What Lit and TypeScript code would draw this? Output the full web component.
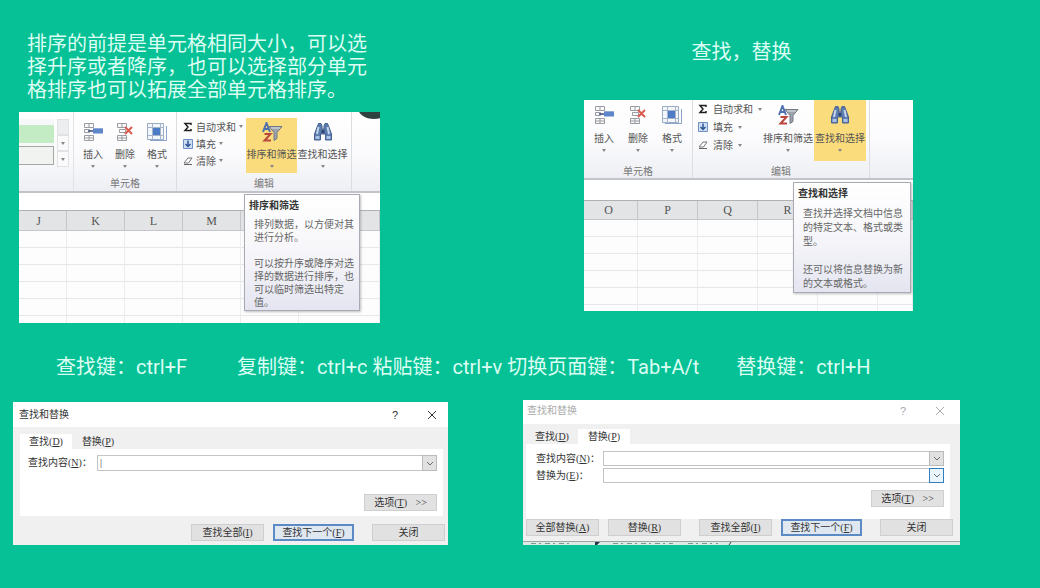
import { LitElement, html, css, svg, nothing } from "lit";
import { customElement, property } from "lit/decorators.js";
import { classMap } from "lit/directives/class-map.js";

const insertIcon = html`<svg class="ico" viewBox="0 0 22 20" width="22" height="20" aria-hidden="true">
  <g fill="#fafafa" stroke="#9a9ca3"><path d="M2.500 1.500h9v4h-9zM7 1.500v4M2.500 13.500h9v5h-9zM7 13.500v5M2.500 16h9"/><path d="M2.500 7.500h5v3h-5z"/></g>
  <path d="M6 9h5" stroke="#3a4a78" stroke-width="1.500"/><path d="M11 6.500h10v5H11z" fill="#5f86cb"/><path d="M11 6.500h10" stroke="#8fa9d8"/>
</svg>`;
const deleteIcon = html`<svg class="ico" viewBox="0 0 22 20" width="22" height="20" aria-hidden="true">
  <g fill="#fafafa" stroke="#9a9ca3"><path d="M3.500 1.500h9v4h-9zM8 1.500v4M3.500 13.500h9v5h-9zM8 13.500v5M3.500 16h9"/><path d="M5.500 7.500h6v3h-6z"/></g>
  <path d="M11 5l7 7M18 5l-7 7" stroke="#dd5a50" stroke-width="2"/>
</svg>`;
const formatIcon = html`<svg class="ico" viewBox="0 0 22 20" width="22" height="20" aria-hidden="true">
  <path d="M1.500 1.500h16v16h-16z" fill="#f3f7fc" stroke="#9aabc4"/>
  <path d="M1 5.500h17M1 13.500h17M6.500 1v17M14.500 1v17" stroke="#a6b4ca"/>
  <path d="M7 6h7v7H7z" fill="#4c7cc6"/>
  <path d="M20.500 4v14.500H4" fill="none" stroke="#8aa4cd"/>
</svg>`;
const sortIcon = html`<svg class="ico" viewBox="0 0 22 20" width="22" height="20" aria-hidden="true">
  <path d="M8 4.500h13l-5 6v6l-3 2v-8z" fill="#9da3ab" stroke="#747a84"/>
  <path d="M10 6h9" stroke="#dfe3e8"/>
  <path d="M2 10L5.500 1 9 10M3.500 7h4" fill="none" stroke="#4c6fae" stroke-width="2"/>
  <path d="M3.500 12h6l-6 6.500h6.500" fill="none" stroke="#b9473f" stroke-width="2"/>
</svg>`;
const findIcon = html`<svg class="ico" viewBox="0 0 22 20" width="22" height="20" aria-hidden="true">
  <path d="M5.500 4l1-2.500h2.500l1 2.500v3h2V4l1-2.500h2.500l1 2.500 3 8v6h-6v-6h-5v6H2.500v-6z" fill="#5c7cae" stroke="#46618f"/>
  <path d="M6.500 5L5 12M15.500 5l1.500 7" stroke="#c3d4ee" stroke-width="2"/>
  <path d="M3.500 14h4v3h-4zM14.500 14h4v3h-4z" fill="#a9c2e6"/>
  <path d="M9.500 8h3v3h-3z" fill="#2e4673"/>
</svg>`;
const sumIcon = html`<svg viewBox="0 0 10 10" width="10" height="10" aria-hidden="true"><path d="M8 3V1.500H2L5 5 2 8.500h6V7" fill="none" stroke="#222" stroke-width="1.500"/></svg>`;
const fillIcon = html`<svg viewBox="0 0 10 10" width="10" height="10" aria-hidden="true"><path d="M.500.500h9v9h-9z" fill="#cfdef3" stroke="#6d8fc6"/><path d="M5 1.500v6M2.500 5L5 7.500 7.500 5" fill="none" stroke="#2f5597" stroke-width="1.500"/></svg>`;
const clearIcon = html`<svg viewBox="0 0 10 10" width="10" height="10" aria-hidden="true"><path d="M1 7l4-5h4L5.500 7z" fill="#fff" stroke="#777"/><path d="M1 8.500h8" stroke="#666"/></svg>`;
const caret = html`<svg class="caret" viewBox="0 0 4 3" width="4" height="3" aria-hidden="true"><path d="M0 0h4L2 3z" fill="#888"/></svg>`;
const chevron = svg`<path d="M1 1l3 3 3-3" fill="none" stroke="#6d6d6d"/>`;

@customElement("sheet-view")
export class SheetView extends LitElement {
  @property({ type: Boolean }) gallery = false;
  @property() active: "sort" | "find" = "sort";
  @property({ attribute: false }) columns: string[] = [];
  @property({ attribute: false }) tip: string[] = [];

  static styles = css`
    :host {
      --top: 6px;
      --button: 55px;
      --wide: 51px;
      --row: 17px;
      --ribbon: 81px;
      --bar: 18px;
      --head: 20px;
      --last: 7px;
      --first: 48px;
      --col: 58px;
      --cell: 32px;
      --icon-gap: 5px;
      --icon-top: 4px;
      --list-pad: 0 3px 0 3px;
      --list-gap: 3px;
      --tip-line: 13px;
      --tip-right: 20px;
      --tip-width: 116px;
      --tip-rest: 2px;
      display: block;
      position: relative;
      overflow: hidden;
      background: #fdfdfe;
      color: #555;
      font: 10px/14px "Noto Sans CJK SC", sans-serif;
    }
    :host([active="find"]) {
      --top: 0px;
      --button: 61px;
      --wide: 52px;
      --row: 18px;
      --ribbon: 80px;
      --bar: 21px;
      --head: 19px;
      --last: 6px;
      --first: 54px;
      --col: 60px;
      --cell: 34px;
      --icon-gap: 6px;
      --icon-top: 5px;
      --list-pad: 0 0 0 2px;
      --list-gap: 5px;
      --tip-line: 14px;
      --tip-right: 2px;
      --tip-width: 118px;
    }
    button { font: inherit; color: inherit; border: 0; background: none; padding: 0; margin: 0; white-space: nowrap; }
    .ribbon {
      display: flex;
      box-sizing: border-box;
      height: var(--ribbon);
      border-bottom: 2px solid #c3c4c9;
      background: linear-gradient(#fff, #fbfbfd 50%, #eeeff4);
    }
    .gallery { display: flex; gap: 3px; box-sizing: border-box; width: 55px; padding: 7px 4px 0 0; border-right: 1px solid #e2e3e8; }
    .swatches { flex: 1; display: flex; flex-direction: column; gap: 3px; height: 48px; box-sizing: border-box; padding: 6px 0 2px; background: #f7f8f9; }
    .swatch { flex: 1; background: #c3ecc4; }
    .swatch.plain { background: #f0f3f0; border: 1px solid #a3a8a3; border-left: 0; }
    .arrows { display: flex; flex-direction: column; width: 12px; height: 48px; }
    .arrows button { flex: 1; display: grid; place-items: center; border: 1px solid #e0e2e6; background: #fafafa; }
    .arrows button:first-child { background: #eceef0; }
    .arrows .caret { margin: 0; }
    .group { display: flex; flex-direction: column; box-sizing: border-box; padding: var(--top) 3px 0; border-right: 1px solid #dcdde3; gap: 3px; }
    .tools { display: flex; }
    .name { text-align: center; color: #777; }
    .big { display: flex; flex-direction: column; align-items: center; box-sizing: border-box; min-width: var(--cell); height: var(--button); padding-top: var(--icon-top); }
    .big span { margin-top: var(--icon-gap); }
    .wide { width: var(--wide); }
    .on { background: #fbdc7c; }
    .caret { margin-top: 4px; }
    .list { display: flex; flex-direction: column; padding: var(--list-pad); }
    .small { display: flex; align-items: center; gap: var(--list-gap); height: var(--row); }
    .small .caret { margin: 0; }
    .bar { box-sizing: border-box; height: var(--bar); border-bottom: 1px solid #b0b1b5; background: #fff; }
    table { width: 100%; table-layout: fixed; border-collapse: separate; border-spacing: 0; }
    th { box-sizing: border-box; width: var(--col); height: var(--head); padding: 0; background: #e3e4e6; border-right: 1px solid #c5c6ca; border-bottom: 1px solid #c5c6ca; font: 12px/16px "Liberation Serif", serif; color: #555; }
    th:first-child { width: var(--first); padding-right: 8px; }
    th:last-child { width: auto; }
    :host([active="find"]) th:first-child { padding-right: 4px; }
    td { box-sizing: border-box; height: 17px; padding: 0; border-right: 1px solid #ebecf0; border-bottom: 1px solid #e6e7eb; }
    tr:last-child td { height: var(--last); border-bottom: 0; }
    .tip {
      position: absolute;
      top: 82px;
      right: var(--tip-right);
      width: var(--tip-width);
      box-sizing: border-box;
      padding: 3px 4px var(--tip-rest);
      border: 1px solid #aaaab4;
      background: linear-gradient(#fff, #f6f6fa 50%, #e4e5f0);
      box-shadow: 1px 1px 2px #8888;
      line-height: var(--tip-line);
      color: #666;
    }
    .tip b { display: block; color: #333; }
    .tip p { margin: 6px 0 0 5px; width: 102px; }
    .tip p + p { margin-top: var(--tip-line); }
    .corner { position: absolute; top: -15px; right: -10px; width: 32px; height: 22px; border-radius: 50%; background: #30423f; }
  `;

  private big(icon: unknown, label: string, wide = false, on = false) {
    return html`<button class=${classMap({ big: true, wide, on })}>${icon}<span>${label}</span>${caret}</button>`;
  }

  render() {
    const cells = [...this.columns, ...Array(7 - this.columns.length - 1).fill("")];
    return html`
      <div class="ribbon">
        ${this.gallery
          ? html`<div class="gallery">
              <div class="swatches"><div class="swatch"></div><div class="swatch plain"></div></div>
              <div class="arrows">
                <button aria-label="▲"></button><button aria-label="▼">${caret}</button><button aria-label="…">${caret}</button>
              </div>
            </div>`
          : nothing}
        <div class="group">
          <div class="tools">
            ${this.big(insertIcon, "插入")}${this.big(deleteIcon, "删除")}${this.big(formatIcon, "格式")}
          </div>
          <div class="name">单元格</div>
        </div>
        <div class="group">
          <div class="tools">
            <div class="list">
              <button class="small">${sumIcon}自动求和${caret}</button>
              <button class="small">${fillIcon}填充${caret}</button>
              <button class="small">${clearIcon}清除${caret}</button>
            </div>
            ${this.big(sortIcon, "排序和筛选", true, this.active === "sort")}
            ${this.big(findIcon, "查找和选择", true, this.active === "find")}
          </div>
          <div class="name">编辑</div>
        </div>
      </div>
      <div class="bar"></div>
      <table>
        <thead><tr>${cells.map((c) => html`<th>${c}</th>`)}</tr></thead>
        <tbody>${Array.from({ length: 6 }, () => html`<tr>${cells.map(() => html`<td></td>`)}</tr>`)}</tbody>
      </table>
      <div class="tip" role="tooltip">
        <b>${this.tip[0]}</b>
        ${this.tip.slice(1).map((t) => html`<p>${t}</p>`)}
      </div>
      ${this.gallery ? html`<div class="corner"></div>` : nothing}
    `;
  }
}

@customElement("find-dialog")
export class FindDialog extends LitElement {
  @property({ type: Boolean, reflect: true }) replace = false;

  static styles = css`
    :host {
      --title: 25px;
      --strip: 22px;
      --body: 67px;
      --field: 16px;
      --foot: 29px;
      --body-left: 7px;
      --body-right: 5px;
      --body-pad: 6px 6px 5px 8px;
      --label: 69px;
      display: block;
      background: #f0f0f0;
      color: #333;
      font: 10px/14px "Liberation Serif", "Noto Sans CJK SC", serif;
    }
    :host([replace]) {
      --title: 24px;
      --strip: 20px;
      --body: 75px;
      --field: 15px;
      --foot: 22px;
      --body-left: 3px;
      --body-right: 10px;
      --body-pad: 7px 6px 12px 10px;
      --label: 67px;
    }
    button, input { font: inherit; color: inherit; margin: 0; padding: 0; box-sizing: border-box; border-radius: 0; }
    button { border: 1px solid #cfcfcf; background: #e1e1e1; white-space: nowrap; }
    .title { display: flex; align-items: center; box-sizing: border-box; height: var(--title); padding: 0 10px 0 6px; background: #fff; }
    :host([replace]) .title { padding: 0 14px 2px 4px; color: #aaa; }
    .title span { flex: 1; }
    .title button { display: grid; place-items: center; width: 12px; height: 14px; border: 0; background: none; font: 11px/14px "Liberation Sans", sans-serif; }
    .title button + button { margin-left: 25px; }
    .tabs { display: flex; align-items: flex-end; height: var(--strip); padding-left: var(--body-left); }
    .tabs button { height: 15px; width: 52px; border: 0; background: none; }
    .tabs .on { background: #fff; }
    .body { display: flex; flex-direction: column; gap: 2px; box-sizing: border-box; height: var(--body); margin: 0 var(--body-right) 0 var(--body-left); padding: var(--body-pad); background: #fff; }
    .field { display: flex; align-items: center; height: var(--field); }
    label { width: var(--label); white-space: nowrap; }
    .combo { flex: 1; display: flex; height: var(--field); box-sizing: border-box; border: 1px solid #c4c4c4; }
    input { flex: 1; min-width: 0; border: 0; padding-left: 2px; outline: 0; background: #fff; }
    .combo button { display: grid; place-items: center; width: 15px; height: var(--field); margin: -1px; border-color: #bbb; }
    .combo .hot { border-color: #2f7fc0; background: #eaf5fd; }
    .options { align-self: flex-end; width: 73px; height: 17px; margin-top: auto; }
    .options i { font-style: normal; margin-left: 6px; }
    .foot { display: flex; justify-content: flex-end; gap: 9px; height: var(--foot); box-sizing: border-box; padding: 8px 3px 0 0; }
    :host([replace]) .foot { padding: 0 7px 0 0; }
    .foot button { width: 73px; height: 17px; }
    .foot .main { width: 81px; border: 2px solid #5b8ac4; background: #dfe7f1; }
    .foot .apart { margin-left: 9px; }
    .edge { height: 4px; background: #dfe9e5; border-top: 1px solid #9aa5a2; box-sizing: border-box; }
    .edge svg { display: block; }
  `;

  private field(id: string, text: string, key: string, value: string, hot = false) {
    return html`<div class="field">
      <label for=${id}>${text}(<u>${key}</u>)：</label>
      <div class="combo">
        <input id=${id} .value=${value} />
        <button class=${classMap({ hot })} aria-label="▼"><svg viewBox="0 0 8 5" width="8" height="5">${chevron}</svg></button>
      </div>
    </div>`;
  }

  render() {
    return html`
      <div class="title">
        <span>查找和替换</span>
        <button>?</button>
        <button aria-label="×"><svg viewBox="0 0 10 10" width="10" height="10"><path d="M1 1l8 8M9 1L1 9" stroke="currentColor"/></svg></button>
      </div>
      <div class="tabs" role="tablist">
        <button role="tab" class=${classMap({ on: !this.replace })}>查找(<u>D</u>)</button>
        <button role="tab" class=${classMap({ on: this.replace })}>替换(<u>P</u>)</button>
      </div>
      <div class="body">
        ${this.field("what", "查找内容", "N", this.replace ? "" : "|")}
        ${this.replace ? this.field("with", "替换为", "E", "", true) : nothing}
        <button class="options">选项(<u>T</u>) <i>&gt;&gt;</i></button>
      </div>
      <div class="foot">
        ${this.replace
          ? html`<button>全部替换(<u>A</u>)</button><button>替换(<u>R</u>)</button>`
          : nothing}
        <button class=${classMap({ apart: this.replace })}>查找全部(<u>I</u>)</button>
        <button class="main">查找下一个(<u>F</u>)</button>
        <button class="apart">关闭</button>
      </div>
      ${this.replace
        ? html`<div class="edge"><svg viewBox="0 0 240 3" width="240" height="3" aria-hidden="true"><path d="M72 0h5l-3 3h-2z" fill="#234"/><path d="M8 1.500h40M90 1.500h60M165 1.500h30" stroke="#7b9a92" stroke-dasharray="5 3 2 4"/><path d="M208 0l-2 3" stroke="#345"/></svg></div>`
        : nothing}
    `;
  }
}

const keys = [
  ["查找键：ctrl+F", "far"],
  ["复制键：ctrl+c", ""],
  ["粘贴键：ctrl+v", ""],
  ["切换页面键：Tab+A/t", "mid"],
  ["替换键：ctrl+H", ""],
];

@customElement("app-root")
export class AppRoot extends LitElement {
  static styles = css`
    :host {
      display: block;
      box-sizing: border-box;
      min-height: 100vh;
      background: #05c195;
      color: #dcfdf3;
      font: 400 20px/23px Roboto, "Noto Sans CJK SC", sans-serif;
    }
    .pair { display: grid; grid-template-columns: 1fr 1fr; align-items: start; }
    p { margin: 0; }
    .left { padding: 33px 140px 0 19px; }
    .left p { width: 342px; padding-left: 8px; margin-bottom: 10px; }
    .right { padding: 41px 127px 0 64px; }
    .right p { text-align: center; padding-right: 14px; margin-bottom: 36px; }
    .keys { display: flex; flex-wrap: wrap; gap: 5px; padding: 33px 0 21px 56px; }
    .far { margin-right: 45px; }
    .mid { margin-right: 32px; }
    .find { padding: 2px 72px 0 13px; }
    .swap { padding: 0 80px 0 3px; }
  `;

  render() {
    return html`
      <main>
        <div class="pair">
          <section class="left">
            <p>排序的前提是单元格相同大小，可以选择升序或者降序，也可以选择部分单元格排序也可以拓展全部单元格排序。</p>
            <sheet-view
              gallery
              active="sort"
              .columns=${["J", "K", "L", "M"]}
              .tip=${["排序和筛选", "排列数据，以方便对其进行分析。", "可以按升序或降序对选择的数据进行排序，也可以临时筛选出特定值。"]}
            ></sheet-view>
          </section>
          <section class="right">
            <p>查找，替换</p>
            <sheet-view
              active="find"
              .columns=${["O", "P", "Q", "R"]}
              .tip=${["查找和选择", "查找并选择文档中信息的特定文本、格式或类型。", "还可以将信息替换为新的文本或格式。"]}
            ></sheet-view>
          </section>
        </div>
        <div class="keys">${keys.map(([text, cls]) => html`<span class=${cls}>${text}</span>`)}</div>
        <div class="pair">
          <div class="find"><find-dialog></find-dialog></div>
          <div class="swap"><find-dialog replace></find-dialog></div>
        </div>
      </main>
    `;
  }
}
